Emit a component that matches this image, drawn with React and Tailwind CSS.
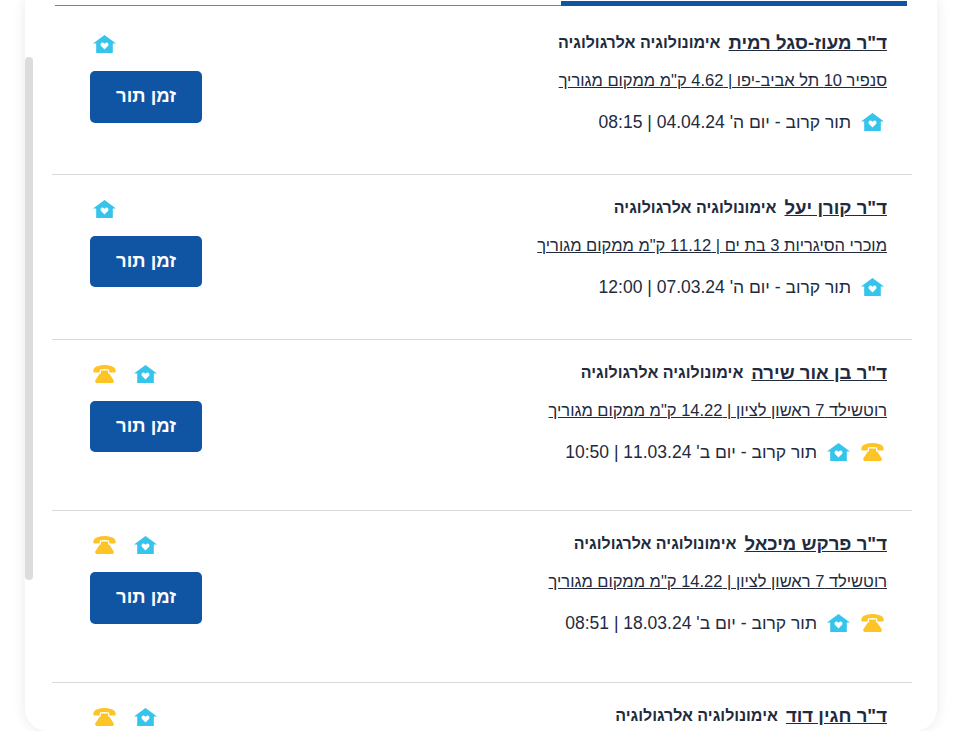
import React from 'react';

const doctors = [
  { name: 'ד"ר מעוז-סגל רמית', address: 'סנפיר 10 תל אביב-יפו | 4.62 ק"מ ממקום מגוריך', next: "תור קרוב - יום ה' 04.04.24 | 08:15", phone: false, height: 'h-[168px]', button: 'h-[52px]' },
  { name: 'ד"ר קורן יעל', address: 'מוכרי הסיגריות 3 בת ים | 11.12 ק"מ ממקום מגוריך', next: "תור קרוב - יום ה' 07.03.24 | 12:00", phone: false, height: 'h-[165px]', button: 'h-[51px]' },
  { name: 'ד"ר בן אור שירה', address: 'רוטשילד 7 ראשון לציון | 14.22 ק"מ ממקום מגוריך', next: "תור קרוב - יום ב' 11.03.24 | 10:50", phone: true, height: 'h-[171px]', button: 'h-[51px]' },
  { name: 'ד"ר פרקש מיכאל', address: 'רוטשילד 7 ראשון לציון | 14.22 ק"מ ממקום מגוריך', next: "תור קרוב - יום ב' 18.03.24 | 08:51", phone: true, height: 'h-[172px]', button: 'h-[52px]' },
  { name: 'ד"ר חגין דוד', address: 'רוטשילד 7 ראשון לציון | 14.22 ק"מ ממקום מגוריך', next: "תור קרוב - יום ב' 18.03.24 | 08:51", phone: true, height: 'h-[172px]', button: 'h-[52px]' },
];

const HomeIcon = () => (
  <svg width="23" height="18" viewBox="0 0 23 18" className="shrink-0">
    <path
      fillRule="evenodd"
      fill="#34c4ec"
      d="M11.5 0 L23 8.6 L19.8 8.6 L19.8 18 L3.2 18 L3.2 8.6 L0 8.6 Z M11.5 14.4 L15.2 10.8 C16.2 9 14.4 7 12.7 7.8 L11.5 8.7 L10.3 7.8 C8.6 7 6.8 9 7.8 10.8 Z"
    />
  </svg>
);

const PhoneIcon = () => (
  <svg width="23" height="18" viewBox="0 0 23 18" className="shrink-0">
    <path
      fill="#fdc426"
      d="M0.3 6.5 C0 3.5 2 1.8 5 1 C9 -0.2 14 -0.2 18 1 C21 1.8 23 3.5 22.7 6.5 C22.6 7.3 22 7.6 21.2 7.6 L17.6 7.6 C16.7 7.6 16.2 7.1 16.2 6.2 L16.2 4.6 C13.5 3.8 9.5 3.8 6.8 4.6 L6.8 6.2 C6.8 7.1 6.3 7.6 5.4 7.6 L1.8 7.6 C1 7.6 0.4 7.3 0.3 6.5 Z M8 5.6 L15 5.6 L15 7.4 C15 8.2 15.6 8.6 16.4 8.7 L20.6 15.2 C21.2 16.6 20.4 18 19 18 L4 18 C2.6 18 1.8 16.6 2.4 15.2 L6.6 8.7 C7.4 8.6 8 8.2 8 7.4 Z"
    />
  </svg>
);

const DoctorRow = ({ doctor }) => (
  <div className={`${doctor.height} flex justify-between border-b border-[#dadada] pr-[25px] pl-[38px] pt-[19px] first:pt-[22px] last:border-b-0`}>
    <div className="text-[#222b3e]">
      <div className="flex h-[28px] items-center">
        <a className="text-[18.6px] font-bold underline">{doctor.name}</a>
        <span className="mr-[8px] text-[16px] font-bold">אימונולוגיה אלרגולוגיה</span>
      </div>
      <div className="mt-[11px] h-[24px] text-[16.5px] leading-[24px] underline">{doctor.address}</div>
      <div className="mt-[18px] flex h-[24px] items-center gap-[10px] pr-[3px] text-[17.5px]">
        {doctor.phone && <div className="ml-[1px] flex"><PhoneIcon /></div>}
        <HomeIcon />
        <span>{doctor.next}</span>
      </div>
    </div>
    <div className="flex w-[112px] flex-col">
      <div className="flex h-[28px] items-center justify-end gap-[18px] pl-[3px] pt-[2px]">
        <HomeIcon />
        {doctor.phone && <PhoneIcon />}
      </div>
      <button className={`${doctor.button} mt-[14px] w-[112px] rounded-[5px] bg-[#1054a4] pb-[2px] text-[18.5px] font-bold text-white`}>
        זמן תור
      </button>
    </div>
  </div>
);

const App = () => {
  return (
    <div dir="rtl" className="h-[731px] overflow-hidden bg-white font-['Liberation_Sans',Arial,sans-serif]">
      <div className="relative mr-[35px] ml-[25px] h-[731px] w-[912px] rounded-b-[22px] bg-white px-[27px] shadow-[0_0_14px_rgba(0,0,0,0.09)]">
        <div className="absolute top-[57px] left-0 h-[523px] w-[8px] rounded-full bg-[#dcdcdc]" />
        <div className="mr-[3px] flex h-[7px] w-[852px]">
          <div className="mt-px h-[5px] w-[346px] bg-[#1054a4]" />
          <div className="mt-[5px] h-px w-[506px] bg-[#7f8086]" />
        </div>
        <div className="mr-[-2px] w-[860px]">
          {doctors.map((doctor) => (
            <DoctorRow key={doctor.name} doctor={doctor} />
          ))}
        </div>
      </div>
    </div>
  );
};

export default App;
